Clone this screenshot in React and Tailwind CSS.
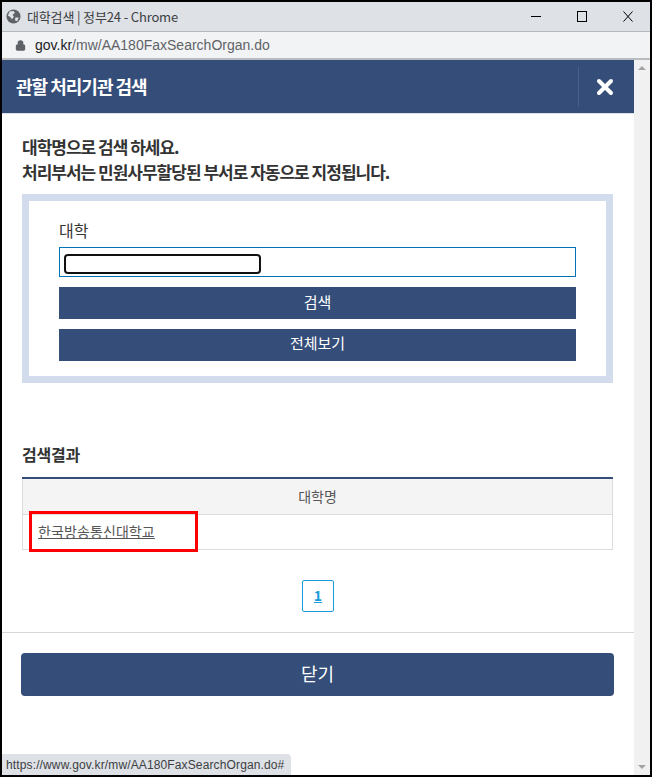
import React from 'react';
import { Lock, X } from 'lucide-react';

const sans = 'font-["Noto_Sans_CJK_KR","Noto_Sans",sans-serif]';

const App = () => {
    return (
        <div className={`relative flex h-[777px] w-[652px] flex-col overflow-hidden border-2 border-black bg-white ${sans}`}>
            {/* Chrome title bar */}
            <div className="flex h-[30px] shrink-0 items-center border-b border-[#b4b7ba] bg-[#dee1e6] pb-[1px] pl-[4px] pr-[17px]">
                <svg width="15" height="15" viewBox="0 0 16 16" className="shrink-0">
                    <circle cx="8" cy="8" r="7.5" fill="#5f6368" />
                    <path d="M4 2.5 L8 2 L9.5 4 L7 6.5 L8.5 8 L6.5 11 L4.5 8.5 L2 7 Z M10 9 L13.5 9 L12 13 L9.5 12 Z" fill="#dee1e6" />
                </svg>
                <span className="ml-[6px] flex-1 font-['Noto_Sans_CJK_KR','Liberation_Sans',sans-serif] text-[13px] leading-none tracking-[-0.15px] text-[#3c4043]">대학검색 | 정부24 - Chrome</span>
                <svg width="10" height="11" viewBox="0 0 10 11" className="mr-[36px]"><path d="M0 5.5H10" stroke="#000" /></svg>
                <svg width="10" height="11" viewBox="0 0 10 11" className="mr-[36px]"><rect x="0.5" y="0.5" width="9" height="10" fill="none" stroke="#000" /></svg>
                <svg width="10" height="11" viewBox="0 0 10 11"><path d="M0.5 0.5L9.5 10.5M9.5 0.5L0.5 10.5" stroke="#000" /></svg>
            </div>
            {/* Address bar */}
            <div className="flex h-[28px] shrink-0 items-center border-b-2 border-[#b9bbbd] bg-[#f1f3f4] pl-[13px]">
                <Lock size={11} strokeWidth={2.5} className="text-[#5f6368]" fill="#5f6368" />
                <span className="ml-[9px] font-['Liberation_Sans',sans-serif] text-[14px] leading-none text-[#5f6368]"><span className="text-[#202124]">gov.kr</span>/mw/AA180FaxSearchOrgan.do</span>
            </div>

            <div className="flex min-h-0 flex-1">
                <div className="relative flex w-[632px] flex-col">
                    {/* Modal header */}
                    <div className="flex h-[54px] shrink-0 items-center justify-between border-b border-[#d8dde6] bg-[#344d79] pl-[14px] pr-[3px]">
                        <h1 className="pb-[2px] text-[18px] font-bold leading-none tracking-[-1px] text-white">관할 처리기관 검색</h1>
                        <div className="flex h-[40px] w-[53px] items-center justify-center border-l border-[#4a6188]">
                            <X size={24} strokeWidth={4} className="text-white" />
                        </div>
                    </div>

                    <div className="px-[20px] pt-[20px]">
                        <p className="text-[17px] font-bold leading-[25px] tracking-[-1px] text-[#333333]">
                            대학명으로 검색 하세요.<br />처리부서는 민원사무할당된 부서로 자동으로 지정됩니다.
                        </p>
                        <div className="mt-[10px] h-[189px] w-[591px] border-[7px] border-[#d3dcec] px-[30px] pt-[17px]">
                            <label className="block text-[16px] leading-[24px] text-[#333333]">대학</label>
                            <div className="mt-[5px] flex h-[30px] items-center border border-[#0072b5] pl-[4px]">
                                <div className="mt-[4px] h-[20px] w-[197px] rounded-[4px] border-2 border-[#111111] bg-white" />
                            </div>
                            <button className="mt-[10px] block h-[32px] w-full bg-[#344d79] pb-[2px] text-[15px] text-white">검색</button>
                            <button className="mt-[10px] block h-[32px] w-full bg-[#344d79] pb-[3px] text-[15px] text-white">전체보기</button>
                        </div>

                        <h2 className="mt-[59px] text-[16px] font-bold leading-[24px] tracking-[-0.2px] text-[#333333]">검색결과</h2>
                        <table className="mt-[11px] w-[591px] border-collapse border-t-2 border-t-[#344d79]">
                            <thead>
                                <tr>
                                    <th className="h-[36px] border border-t-0 border-[#dddddd] bg-[#f4f4f4] text-[14px] font-normal text-[#555555]">대학명</th>
                                </tr>
                            </thead>
                            <tbody>
                                <tr>
                                    <td className="h-[35px] border border-[#dddddd] pl-[15px] text-[14px] tracking-[0.1px] text-[#555555] underline">한국방송통신대학교</td>
                                </tr>
                            </tbody>
                        </table>
                        <div className="mt-[30px] flex justify-center">
                            <a className="flex h-[32px] w-[32px] items-center justify-center rounded-[2px] border border-[#1a9bdc] text-[14px] font-bold text-[#1a9bdc] underline">1</a>
                        </div>
                    </div>

                    <div className="mt-[20px] border-t border-[#d8d8d8] px-[19px] pt-[20px]">
                        <button className="block h-[43px] w-[593px] rounded-[4px] bg-[#344d79] pb-[2px] text-[18px] text-white">닫기</button>
                    </div>

                    {/* Red annotation */}
                    <div className="absolute left-[27px] top-[451px] h-[41px] w-[169px] border-[3px] border-[#ff0000]" />
                </div>

                {/* Scrollbar */}
                <div className="flex w-[16px] flex-col items-center justify-between bg-[#f1f1f1] py-[6px]">
                    <div className="h-0 w-0 border-x-[4px] border-b-[4px] border-x-transparent border-b-[#a3a3a3]" />
                    <div className="h-0 w-0 border-x-[4px] border-t-[4px] border-x-transparent border-t-[#a3a3a3]" />
                </div>
            </div>

            {/* Link status bubble */}
            <div className="absolute bottom-0 left-0 flex h-[21px] w-[289px] items-center rounded-tr-[4px] bg-[#dee1e6] pl-[4px] font-['Liberation_Sans',sans-serif] text-[12px] tracking-[0.13px] text-[#3c4043]">
                https://www.gov.kr/mw/AA180FaxSearchOrgan.do#
            </div>
        </div>
    );
};

export default App;
